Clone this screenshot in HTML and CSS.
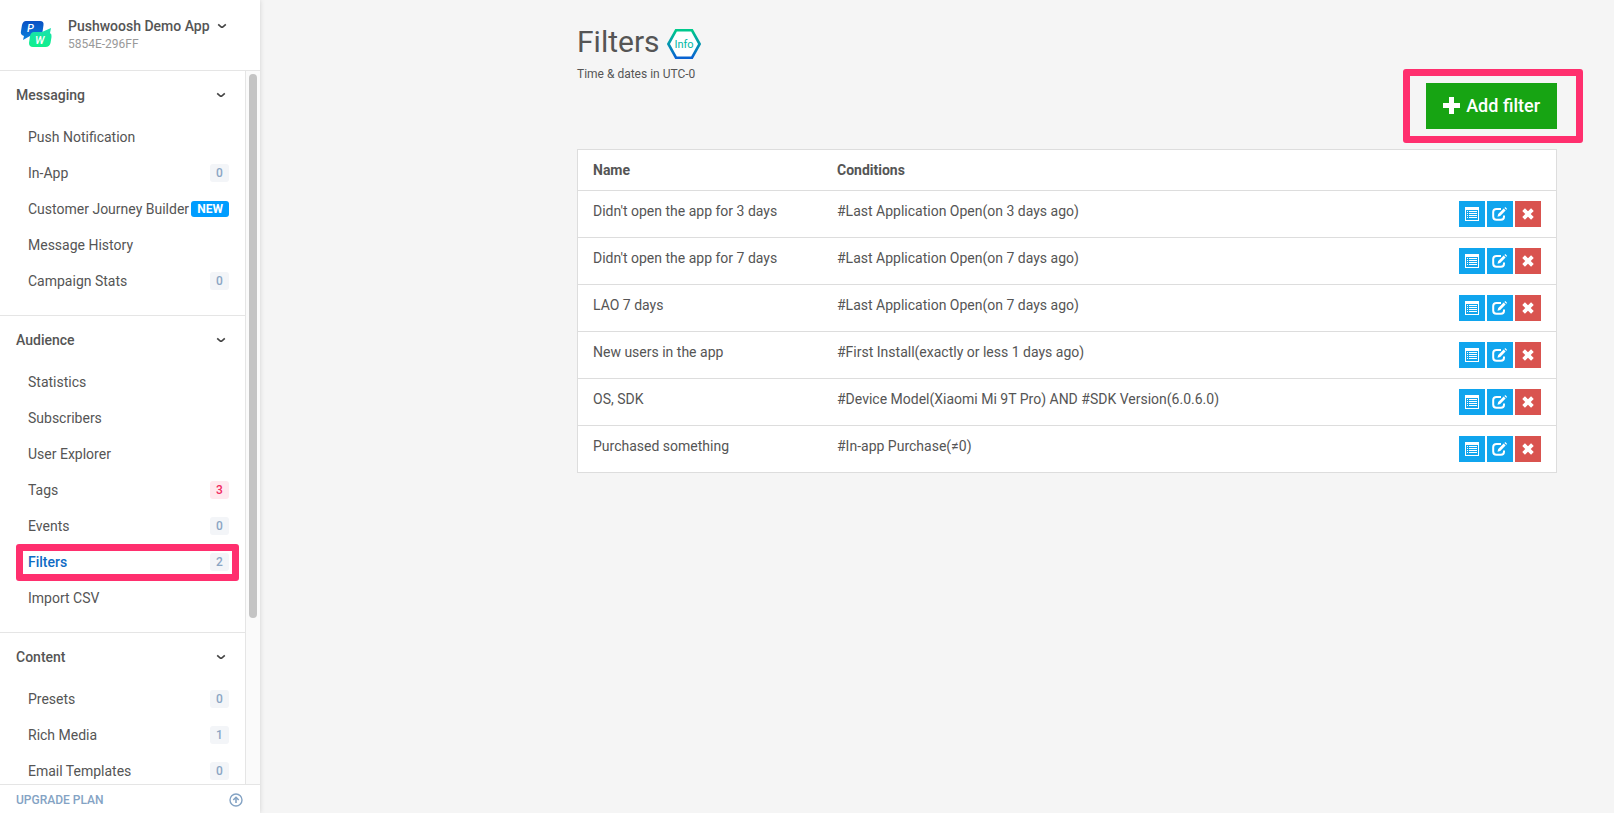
FILE: index.html
```html
<!DOCTYPE html>
<html lang="en">
<head>
    <meta charset="UTF-8">
    <meta name="viewport" content="width=device-width, initial-scale=1.0">
    <title>Filters</title>
    <link rel="stylesheet" href="styles.css">
</head>
<body>
    <!-- shared icons -->
    <svg class="sprite" aria-hidden="true">
        <symbol id="chevron" viewBox="0 0 10 6"><path d="M1.200 1.300 4 3.800Q5 4.500 6 3.800L8.800 1.300" fill="none" stroke="currentColor" stroke-width="1.600"/></symbol>
        <symbol id="list" viewBox="0 0 14 14">
            <path fill="currentColor" fill-rule="evenodd" d="M0 0h14v14H0z M1 3v10h12V3z"/>
            <path fill="currentColor" d="M2 4h1v1H2z M2 6h1v1H2z M2 8h1v1H2z M2 10h1v1H2z M4 4h8v1H4z M4 6h8v1H4z M4 8h8v1H4z M4 10h8v1H4z"/>
        </symbol>
        <symbol id="edit" viewBox="0 0 16 14">
            <path d="M9 2H4.500Q1.200 2 1.200 5v4.500Q1.200 12.800 4.500 12.800H9q3 0 3-3V8.500" fill="none" stroke="currentColor" stroke-width="2"/>
            <path fill="currentColor" d="M5.500 9.800 6.200 7 11.700 1.600 13.600 3.500 8.200 9z M12.400 .9 13.300 0l1.900 1.900-.9.900z"/>
        </symbol>
        <symbol id="cross" viewBox="0 0 12 12"><path d="M1.600 1.600 10.400 10.400M10.400 1.600 1.600 10.400" stroke="currentColor" stroke-width="3.800"/></symbol>
    </svg>

    <aside class="sidebar">
        <header class="app">
            <svg class="logo" viewBox="0 0 32 30" aria-hidden="true">
                <defs>
                    <linearGradient id="blue" x1="0" y1="0" x2="0" y2="1"><stop offset="0" stop-color="#0a50c4"/><stop offset="1" stop-color="#0a82dc"/></linearGradient>
                    <linearGradient id="green" x1="0" y1="0" x2="0" y2="1"><stop offset="0" stop-color="#1be0b0"/><stop offset="1" stop-color="#0ff08c"/></linearGradient>
                </defs>
                <path fill="url(#blue)" d="M6 1h14q4 0 3.500 4l-1 7q-1 4-5 4H10l-7 4 1-4Q0 15 1 11l1-6q1-4 4-4z"/>
                <path fill="url(#green)" d="M14 12h8l9-4-1 5q2 1 1.500 4l-1 6q-1 4-5 4H13q-4 0-4-4l1-7q1-4 4-4z"/>
                <text class="logo-letter" x="7" y="12">P</text>
                <text class="logo-letter" x="15" y="24">W</text>
            </svg>
            <div class="app-info">
                <button class="app-name" type="button">Pushwoosh Demo App <svg class="chevron"><use href="#chevron"/></svg></button>
                <span class="app-code">5854E-296FF</span>
            </div>
        </header>

        <div class="menu-wrap">
            <nav class="menu">
                <section class="group">
                    <button class="group-title" type="button">Messaging <svg class="chevron"><use href="#chevron"/></svg></button>
                    <ul>
                        <li><a href="#push">Push Notification</a></li>
                        <li><a href="#inapp">In-App <span class="badge">0</span></a></li>
                        <li><a href="#journey">Customer Journey Builder <span class="badge new">NEW</span></a></li>
                        <li><a href="#history">Message History</a></li>
                        <li><a href="#campaign">Campaign Stats <span class="badge">0</span></a></li>
                    </ul>
                </section>
                <section class="group">
                    <button class="group-title" type="button">Audience <svg class="chevron"><use href="#chevron"/></svg></button>
                    <ul>
                        <li><a href="#statistics">Statistics</a></li>
                        <li><a href="#subscribers">Subscribers</a></li>
                        <li><a href="#users">User Explorer</a></li>
                        <li><a href="#tags">Tags <span class="badge alert">3</span></a></li>
                        <li><a href="#events">Events <span class="badge">0</span></a></li>
                        <li><a class="active" href="#filters">Filters <span class="badge">2</span></a></li>
                        <li><a href="#import">Import CSV</a></li>
                    </ul>
                </section>
                <section class="group">
                    <button class="group-title" type="button">Content <svg class="chevron"><use href="#chevron"/></svg></button>
                    <ul>
                        <li><a href="#presets">Presets <span class="badge">0</span></a></li>
                        <li><a href="#media">Rich Media <span class="badge">1</span></a></li>
                        <li><a href="#email">Email Templates <span class="badge">0</span></a></li>
                    </ul>
                </section>
            </nav>
            <div class="scroll"><div class="thumb"></div></div>
        </div>

        <a class="upgrade" href="#upgrade">UPGRADE PLAN
            <svg class="upgrade-icon" viewBox="0 0 14 14" fill="none" stroke="currentColor"><circle cx="7" cy="7" r="6" stroke-width="1.400"/><path d="M7 10V5" stroke-width="1.600"/><path d="M4.300 7 7 4.300 9.700 7" stroke-width="1.600"/></svg>
        </a>
    </aside>

    <main>
        <div class="content" id="filters">
            <div class="page-head">
                <div>
                    <h1>Filters
                        <svg class="info" viewBox="0 0 34 30">
                            <defs><linearGradient id="hex" x1="0" y1="0" x2="0" y2="1"><stop offset="0" stop-color="#00c98c"/><stop offset="1" stop-color="#0a63d2"/></linearGradient></defs>
                            <path d="M9 1.300h16L32.600 15 25 28.700H9L1.400 15z" fill="#fff" stroke="url(#hex)" stroke-width="2.600"/>
                            <text x="17" y="19" text-anchor="middle">Info</text>
                        </svg>
                    </h1>
                    <p>Time &amp; dates in UTC-0</p>
                </div>
                <div class="add-wrap">
                    <button class="add" type="button"><svg class="plus" viewBox="0 0 17 17"><path fill="currentColor" d="M6 0h5v6h6v5h-6v6H6v-6H0V6h6z"/></svg>Add filter</button>
                </div>
            </div>

            <table>
                <thead>
                    <tr><th class="name">Name</th><th>Conditions</th><th class="actions"></th></tr>
                </thead>
                <tbody>
                    <tr>
                        <td>Didn't open the app for 3 days</td>
                        <td>#Last Application Open(on 3 days ago)</td>
                        <td><div class="tools">
                            <button type="button" aria-label="Details"><svg class="i-list"><use href="#list"/></svg></button>
                            <button type="button" aria-label="Edit"><svg class="i-edit"><use href="#edit"/></svg></button>
                            <button class="delete" type="button" aria-label="Delete"><svg class="i-cross"><use href="#cross"/></svg></button>
                        </div></td>
                    </tr>
                    <tr>
                        <td>Didn't open the app for 7 days</td>
                        <td>#Last Application Open(on 7 days ago)</td>
                        <td><div class="tools">
                            <button type="button" aria-label="Details"><svg class="i-list"><use href="#list"/></svg></button>
                            <button type="button" aria-label="Edit"><svg class="i-edit"><use href="#edit"/></svg></button>
                            <button class="delete" type="button" aria-label="Delete"><svg class="i-cross"><use href="#cross"/></svg></button>
                        </div></td>
                    </tr>
                    <tr>
                        <td>LAO 7 days</td>
                        <td>#Last Application Open(on 7 days ago)</td>
                        <td><div class="tools">
                            <button type="button" aria-label="Details"><svg class="i-list"><use href="#list"/></svg></button>
                            <button type="button" aria-label="Edit"><svg class="i-edit"><use href="#edit"/></svg></button>
                            <button class="delete" type="button" aria-label="Delete"><svg class="i-cross"><use href="#cross"/></svg></button>
                        </div></td>
                    </tr>
                    <tr>
                        <td>New users in the app</td>
                        <td>#First Install(exactly or less 1 days ago)</td>
                        <td><div class="tools">
                            <button type="button" aria-label="Details"><svg class="i-list"><use href="#list"/></svg></button>
                            <button type="button" aria-label="Edit"><svg class="i-edit"><use href="#edit"/></svg></button>
                            <button class="delete" type="button" aria-label="Delete"><svg class="i-cross"><use href="#cross"/></svg></button>
                        </div></td>
                    </tr>
                    <tr>
                        <td>OS, SDK</td>
                        <td>#Device Model(Xiaomi Mi 9T Pro) AND #SDK Version(6.0.6.0)</td>
                        <td><div class="tools">
                            <button type="button" aria-label="Details"><svg class="i-list"><use href="#list"/></svg></button>
                            <button type="button" aria-label="Edit"><svg class="i-edit"><use href="#edit"/></svg></button>
                            <button class="delete" type="button" aria-label="Delete"><svg class="i-cross"><use href="#cross"/></svg></button>
                        </div></td>
                    </tr>
                    <tr>
                        <td>Purchased something</td>
                        <td>#In-app Purchase(≠0)</td>
                        <td><div class="tools">
                            <button type="button" aria-label="Details"><svg class="i-list"><use href="#list"/></svg></button>
                            <button type="button" aria-label="Edit"><svg class="i-edit"><use href="#edit"/></svg></button>
                            <button class="delete" type="button" aria-label="Delete"><svg class="i-cross"><use href="#cross"/></svg></button>
                        </div></td>
                    </tr>
                </tbody>
            </table>
        </div>
    </main>
</body>
</html>
```
FILE: styles.css
```css
* {
    box-sizing: border-box;
}
body {
    display: flex;
    height: 100vh;
    margin: 0;
    overflow: hidden;
    background-color: #f5f5f5;
    color: #555;
    font-family: Roboto, "Liberation Sans", sans-serif;
    font-size: 14px;
    line-height: 20px;
}
button {
    padding: 0;
    border: 0;
    background: none;
    color: inherit;
    font: inherit;
    cursor: pointer;
}
a {
    color: inherit;
    text-decoration: none;
}
h1, p, ul {
    margin: 0;
    padding: 0;
}
.sprite {
    display: none;
}
.chevron {
    width: 10px;
    height: 6px;
    color: #444;
}

/* sidebar */
.sidebar {
    display: flex;
    flex-direction: column;
    flex: 0 0 260px;
    background-color: #fff;
    box-shadow: 0 0 5px rgba(0, 0, 0, 0.15);
}
.app {
    display: flex;
    gap: 16px;
    height: 71px;
    padding: 16px 20px;
    border-bottom: 1px solid #e5e5e5;
}
.logo {
    width: 32px;
    height: 30px;
    margin-top: 4px;
}
.logo-letter {
    fill: #fff;
    font-size: 11px;
    font-style: italic;
    font-weight: 500;
}
.app-info {
    display: flex;
    flex-direction: column;
    align-items: flex-start;
}
.app-name {
    display: flex;
    align-items: center;
    gap: 7px;
    font-weight: 500;
    white-space: nowrap;
}
.app-code {
    color: #999;
    font-size: 12px;
    line-height: 16px;
}
.menu-wrap {
    display: flex;
    flex: 1;
    min-height: 0;
}
.menu {
    flex: 1;
    overflow: hidden;
    border-right: 1px solid #e5e5e5;
}
.scroll {
    width: 14px;
    padding: 3px;
    background-color: #fafafa;
}
.thumb {
    width: 8px;
    height: 77%;
    border-radius: 4px;
    background-color: #c4c4c4;
}
.group {
    padding-bottom: 16px;
    border-bottom: 1px solid #e5e5e5;
}
.group-title {
    display: flex;
    align-items: center;
    justify-content: space-between;
    width: 100%;
    height: 48px;
    padding: 0 19px 0 16px;
    font-weight: 500;
}
.group ul {
    list-style-type: none;
}
.group a {
    position: relative;
    display: flex;
    align-items: center;
    justify-content: space-between;
    height: 36px;
    padding: 0 16px 0 28px;
    white-space: nowrap;
}
.group .active {
    color: #0f6bc4;
    font-weight: 500;
}
.active::after {
    content: "";
    position: absolute;
    inset: 0 6px -1px 16px;
    border: 7px solid #ff2f6e;
    border-radius: 3px;
}
.badge {
    min-width: 19px;
    border-radius: 3px;
    background-color: #f3f5f8;
    color: #8ba5c4;
    font-size: 12px;
    font-weight: 500;
    line-height: 18px;
    text-align: center;
}
.badge.alert {
    background-color: #ffe8ee;
    color: #f0285f;
}
.badge.new {
    padding: 0 6px;
    background-color: #009dff;
    color: #fff;
    font-weight: 700;
    line-height: 16px;
}
.upgrade {
    display: flex;
    align-items: center;
    justify-content: space-between;
    height: 29px;
    padding: 2px 17px 0 16px;
    border-top: 1px solid #e5e5e5;
    color: #84a3c4;
    font-size: 12px;
    font-weight: 500;
}
.upgrade-icon {
    width: 14px;
    height: 14px;
}

/* page */
main {
    flex: 1;
    padding: 22px 57px 0 40px;
}
.content {
    max-width: 980px;
    margin-left: auto;
}
.page-head {
    display: flex;
    justify-content: space-between;
    height: 127px;
}
h1 {
    display: flex;
    align-items: center;
    gap: 7px;
    font-size: 30px;
    font-weight: 400;
    line-height: 40px;
}
.info {
    width: 34px;
    height: 30px;
    margin-top: 4px;
}
.info text {
    fill: #00b8a4;
    font-size: 11px;
}
.page-head p {
    font-size: 12px;
    line-height: 24px;
}
.add-wrap {
    position: relative;
    padding-top: 61px;
}
.add-wrap::after {
    content: "";
    position: absolute;
    inset: 47px -26px 6px -23px;
    border: 7px solid #ff2f6e;
    border-radius: 3px;
    pointer-events: none;
}
.add {
    display: flex;
    align-items: center;
    gap: 6px;
    height: 46px;
    padding: 0 17px;
    background-color: #17a413;
    color: #fff;
    font-size: 18px;
    font-weight: 500;
}
.plus {
    width: 17px;
    height: 17px;
    margin-bottom: 2px;
}
table {
    width: 100%;
    border: 1px solid #ddd;
    border-collapse: separate;
    border-spacing: 0;
    background-color: #fff;
}
th, td {
    padding: 10px 15px;
    text-align: left;
    vertical-align: top;
}
td {
    border-top: 1px solid #ddd;
}
.name {
    width: 244px;
}
.actions {
    width: 112px;
}
.tools {
    display: flex;
    gap: 2px;
}
.tools button {
    display: flex;
    align-items: center;
    justify-content: center;
    width: 26px;
    height: 26px;
    background-color: #10a5ee;
    color: #fff;
}
.tools .delete {
    background-color: #d9534f;
}
.i-list {
    width: 14px;
    height: 14px;
}
.i-edit {
    width: 16px;
    height: 14px;
}
.i-cross {
    width: 12px;
    height: 12px;
}
```
